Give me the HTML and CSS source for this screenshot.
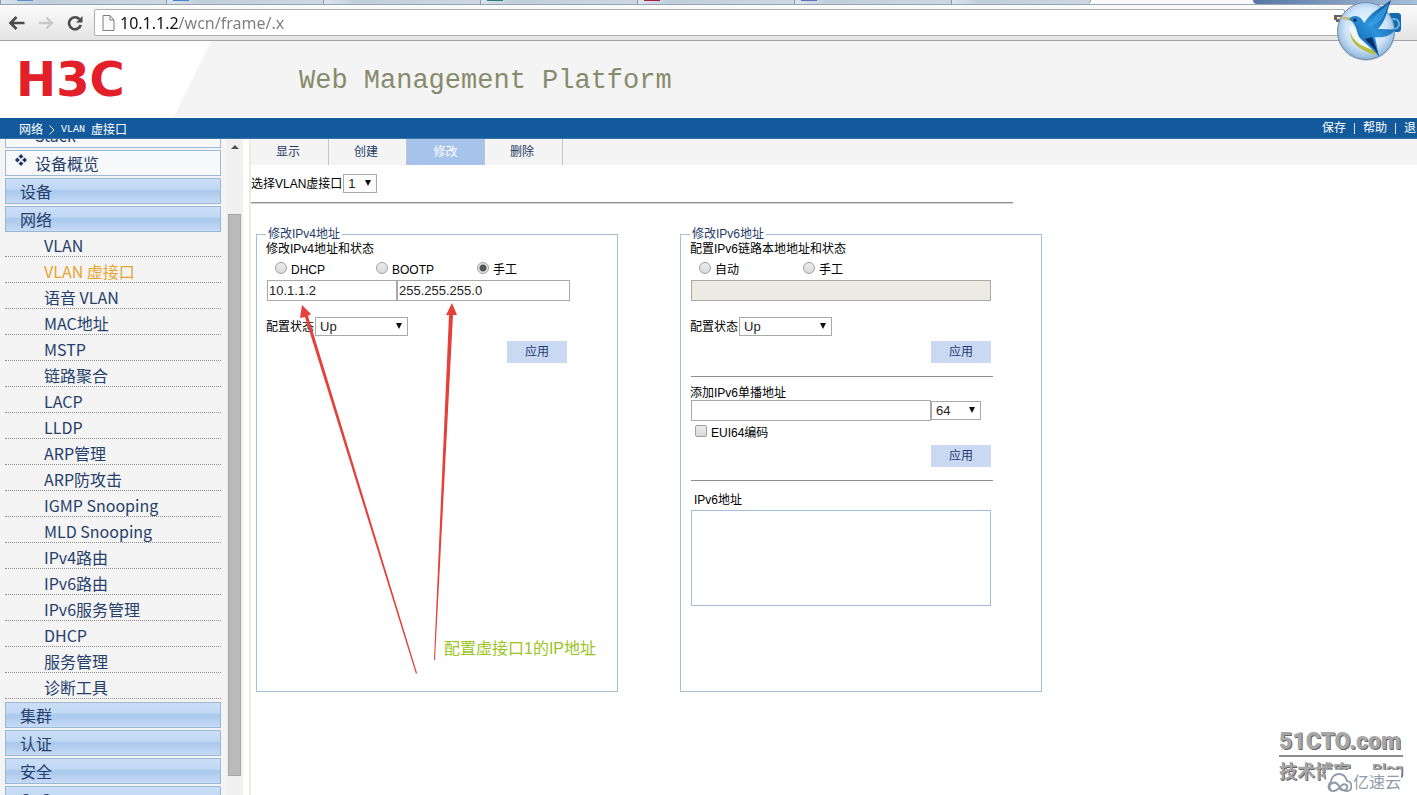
FILE: index.html
```html
<!DOCTYPE html>
<html lang="zh-CN">
<head>
<meta charset="utf-8">
<title>H3C Web Management Platform</title>
<link rel="stylesheet" href="styles.css">
</head>
<body>
<div class="tabstrip">
  <span class="btab btab-first"><i class="fav fav-blue"></i></span>
  <span class="btab"><i class="fav fav-sky"></i></span>
  <span class="btab"></span>
  <span class="btab"><i class="fav fav-teal"></i></span>
  <span class="btab"><i class="fav fav-red"></i></span>
  <span class="btab"><i class="fav fav-indigo"></i></span>
  <span class="btab btab-last"></span>
  <span class="btab-active"></span>
  <span class="caption"></span>
</div>
<div class="toolbar">
  <button class="nav-btn" aria-label="Back"><svg width="18" height="16" viewBox="0 0 18 16"><path d="M8.500 2 2.500 8l6 6M3 8h13.500" fill="none" stroke="#4c4c4c" stroke-width="2.600"/></svg></button>
  <button class="nav-btn" aria-label="Forward"><svg width="18" height="16" viewBox="0 0 18 16"><path d="M9.500 2.500 15 8l-5.500 5.500M15 8H2" fill="none" stroke="#c9c9c9" stroke-width="2.400"/></svg></button>
  <button class="nav-btn" aria-label="Reload"><svg width="18" height="16" viewBox="0 0 18 16"><path d="M13.500 4.200A6 6 0 1 0 14.800 10" fill="none" stroke="#4c4c4c" stroke-width="2.600"/><path d="M16.500 1v6.500H10z" fill="#4c4c4c"/></svg></button>
  <div class="address">
    <svg width="13" height="16" viewBox="0 0 13 16"><path d="M1 .5h7L12 5v10.500H1zM8 .5V5h4" fill="#fafafa" stroke="#7d7d7d"/></svg>
    <input class="url" type="text" value="10.1.1.2/wcn/frame/.x" aria-label="Address">
  </div>
</div>
<svg class="bird" width="80" height="64" viewBox="0 0 80 64">
  <defs>
    <radialGradient id="disc" cx="50%" cy="45%" r="55%"><stop offset="0" stop-color="#f2f9ff"/><stop offset=".65" stop-color="#cfe6fb"/><stop offset="1" stop-color="#8fb4d8"/></radialGradient>
    <linearGradient id="wing" x1="0" y1="1" x2="1" y2="0"><stop offset="0" stop-color="#0b4e9c"/><stop offset=".5" stop-color="#2b93dc"/><stop offset="1" stop-color="#0a4186"/></linearGradient>
  </defs>
  <path d="M4 15h9v7H6v-2H4z" fill="#69645a"/><path d="M7 17h5v2H7z" fill="#e9e6dd"/>
  <rect x="58" y="13" width="13" height="19" rx="3" fill="#1568ad"/><circle cx="64" cy="24" r="5" fill="none" stroke="#61b9ea" stroke-width="2"/>
  <ellipse cx="36" cy="33" rx="29" ry="28" fill="#72869b" opacity=".35"/>
  <circle cx="36" cy="31" r="28.500" fill="url(#disc)" stroke="#6c8fb4"/>
  <path d="M10 17c6 0 10 0 14 2l-1 3C19 20 14 19 10 18z" fill="#c9b56d"/>
  <path d="M20 25c-2 11 3 20 12 23l15 6-9-16z" fill="#f0f6fa"/>
  <path d="M20 31c3 11 12 16 27 20l-2 4C29 50 20 43 20 31z" fill="#b9bf45"/>
  <path d="M19 19c4-5 12-4 15 4 9-13 17-15 27-23-4 12-6 22-13 29 8 0 13 1 18 0-5 7-12 9-21 8l4 20c-5-7-12-12-17-17-7-6-3-14-13-21z" fill="url(#wing)"/>
  <path d="M37 27c8-13 15-17 22-24-4 13-9 22-22 24z" fill="#3aa3e6" opacity=".7"/>
  <path d="M35 39l7-2 7 19c-4-8-9-11-14-17z" fill="#092f68"/>
  <circle cx="25" cy="20" r="1.500" fill="#071c3d"/>
</svg>
<header class="banner">
  <div class="brand"><span class="logo">H3C</span></div>
  <h1 class="product">Web Management Platform</h1>
</header>
<div class="crumbs">
  <div class="trail"><span>网络</span><svg width="6" height="10" viewBox="0 0 6 10"><path d="M.5.5 5 5 .5 9.500" fill="none" stroke="#fff"/></svg><span class="mono">VLAN</span><span>虚接口</span></div>
  <div class="links"><a href="#">保存</a><i></i><a href="#">帮助</a><i></i><a href="#">退出</a></div>
</div>
<div class="workspace">
  <aside class="sidebar">
    <nav class="menu">
      <a class="plain" href="#">Stack</a>
      <a class="plain" href="#"><svg width="12" height="12" viewBox="0 0 12 12"><path d="M6 0l2.400 2.400L6 4.800 3.600 2.400zM6 7.200l2.400 2.400L6 12 3.600 9.600zM2.400 3.600L4.800 6 2.400 8.400 0 6zM9.600 3.600L12 6 9.600 8.400 7.200 6z" fill="#173764"/></svg>设备概览</a>
      <a class="group" href="#">设备</a>
      <a class="group" href="#">网络</a>
      <ul class="sub">
        <li><a href="#">VLAN</a></li>
        <li><a class="current" href="#">VLAN 虚接口</a></li>
        <li><a href="#">语音 VLAN</a></li>
        <li><a href="#">MAC地址</a></li>
        <li><a href="#">MSTP</a></li>
        <li><a href="#">链路聚合</a></li>
        <li><a href="#">LACP</a></li>
        <li><a href="#">LLDP</a></li>
        <li><a href="#">ARP管理</a></li>
        <li><a href="#">ARP防攻击</a></li>
        <li><a href="#">IGMP Snooping</a></li>
        <li><a href="#">MLD Snooping</a></li>
        <li><a href="#">IPv4路由</a></li>
        <li><a href="#">IPv6路由</a></li>
        <li><a href="#">IPv6服务管理</a></li>
        <li><a href="#">DHCP</a></li>
        <li><a href="#">服务管理</a></li>
        <li><a href="#">诊断工具</a></li>
      </ul>
      <a class="group" href="#">集群</a>
      <a class="group" href="#">认证</a>
      <a class="group" href="#">安全</a>
      <a class="group" href="#">QoS</a>
    </nav>
    <div class="scroll"><i class="up"></i><i class="thumb"></i></div>
  </aside>
  <main class="content">
    <div class="tabs">
      <button>显示</button><button>创建</button><button class="active">修改</button><button>删除</button>
    </div>
    <div class="chooser">
      <label for="vif">选择VLAN虚接口</label>
      <span class="pick pick-xs"><select id="vif"><option>1</option></select></span>
    </div>
    <hr class="rule">
    <div class="panels">
      <fieldset class="panel">
        <legend>修改IPv4地址</legend>
        <div class="line">修改IPv4地址和状态</div>
        <div class="radios">
          <label><input type="radio" name="v4">DHCP</label>
          <label><input type="radio" name="v4">BOOTP</label>
          <label><input type="radio" name="v4" checked>手工</label>
        </div>
        <div class="fields">
          <input class="box ip" type="text" value="10.1.1.2" aria-label="IP">
          <input class="box mask" type="text" value="255.255.255.0" aria-label="Mask">
        </div>
        <div class="state"><label for="s4">配置状态</label><span class="pick pick-md"><select id="s4"><option>Up</option></select></span></div>
        <div class="actions"><button class="apply">应用</button></div>
      </fieldset>
      <fieldset class="panel">
        <legend>修改IPv6地址</legend>
        <div class="line">配置IPv6链路本地地址和状态</div>
        <div class="radios radios-wide">
          <label><input type="radio" name="v6">自动</label>
          <label><input type="radio" name="v6">手工</label>
        </div>
        <div class="fields"><input class="box full" type="text" disabled aria-label="Link-local"></div>
        <div class="state"><label for="s6">配置状态</label><span class="pick pick-md"><select id="s6"><option>Up</option></select></span></div>
        <div class="actions"><button class="apply">应用</button></div>
        <hr class="split">
        <label class="line" for="uni">添加IPv6单播地址</label>
        <div class="fields"><input class="box uni" id="uni" type="text"><span class="pick pick-sm"><select aria-label="Prefix"><option>64</option></select></span></div>
        <div class="check"><label><input type="checkbox">EUI64编码</label></div>
        <div class="actions actions-tight"><button class="apply">应用</button></div>
        <hr class="split">
        <label class="line list-title" for="list">IPv6地址</label>
        <textarea class="list" id="list"></textarea>
      </fieldset>
    </div>
    <svg class="arrows" width="206" height="372" viewBox="0 0 206 372" fill="#e5403a">
      <path d="M51 2l9 9-3 2 109 357-1 1L54 14l-5 1z"/>
      <path d="M201 0l5 12h-4l-18 345h-1l15-345h-3z"/>
    </svg>
    <div class="note">配置虚接口1的IP地址</div>
  </main>
</div>
<div class="stamp">
  <div class="stamp-name">51CTO.com</div>
  <div class="stamp-sub"><span>技术博客</span><span class="blog">Blog</span></div>
</div>
<div class="cloud">
  <svg width="26" height="20" viewBox="0 0 26 20" fill="none" stroke="#919baa" stroke-width="2"><path d="M6 18a5 5 0 0 1-1-9C5 4 9 1 13 1s7 3 8 7a5 5 0 0 1-1 10c-3 0-5-2-7-5s-4-4-6-3a4 4 0 0 0 1 8c4 0 5-4 8-6s6 0 5 3-5 3-8 0"/></svg>
  <span>亿速云</span>
</div>
</body>
</html>
```
FILE: styles.css
```css
* { box-sizing: border-box; }
body {
  margin: 0;
  height: 100vh;
  overflow: hidden;
  display: flex;
  flex-direction: column;
  position: relative;
  background: #fff;
  font: 12px/14px "Liberation Sans", "Noto Sans CJK SC", sans-serif;
  color: #000;
}
button, input, select, textarea { font: inherit; margin: 0; }
a { color: inherit; text-decoration: none; }

.tabstrip { display: flex; height: 5px; flex: none; background: #f9f9f9; border-bottom: 1px solid #97a3b0; overflow: hidden; }
.btab { width: 157px; padding-left: 6px; background: linear-gradient(90deg, #dbe4ec, #c2cfdc 20%, #cbd7e2); border-left: 1px solid #8c99a8; }
.btab-first { width: 166px; padding-left: 16px; }
.btab-last { width: 140px; border-radius: 0 0 4px 0; border-right: 1px solid #8c99a8; }
.btab-active { width: 162px; background: #f9f9f9; }
.caption { flex: 1; background: linear-gradient(90deg, #5577a5, #a8bfda); border-radius: 0 0 0 4px; }
.fav { display: block; width: 16px; height: 1px; }
.fav-blue { background: #5c8fc9; }
.fav-sky { background: #3b83d0; }
.fav-teal { background: #2c7d7d; }
.fav-red { background: #a8203f; }
.fav-indigo { background: #5f6fc4; }

.toolbar { display: flex; align-items: center; flex: none; height: 36px; padding: 0 72px 0 8px; background: linear-gradient(#fbfbfb, #e4e4e4); border-bottom: 1px solid #a3a3a3; }
.nav-btn { width: 29px; height: 26px; padding: 0; border: 0; background: none; text-align: left; }
.nav-btn svg { display: block; }
.address { flex: 1; display: flex; align-items: center; gap: 5px; height: 27px; margin-left: -1px; padding-left: 7px; background: #fff; border: 1px solid #adadad; border-radius: 2px; }
.url { flex: 1; border: 0; padding: 0; height: 22px; font: 16px/22px "Noto Sans", sans-serif; color: transparent; background: linear-gradient(90deg, #111 59px, #7d7d7d 59px); background-clip: text; -webkit-background-clip: text; }
.bird { position: absolute; top: 0; right: 7px; }

.banner { display: flex; align-items: center; flex: none; height: 77px; background: #f4f4f4; border-bottom: 1px solid #fff; }
.brand { width: 211px; height: 76px; padding: 0 16px; display: flex; align-items: center; background: #fff; clip-path: polygon(0 0, 100% 0, 174px 100%, 0 100%); }
.logo { font: bold 48px/48px "DejaVu Sans", sans-serif; color: #e3202a; }
.product { margin: 0 0 0 88px; padding-top: 4px; font: 27px/36px "Liberation Mono", monospace; color: #878b6c; }

.crumbs { display: flex; justify-content: space-between; align-items: center; flex: none; height: 21px; padding-left: 19px; background: #125a9b; border-bottom: 1px solid #3c76a8; color: #fff; overflow: hidden; white-space: nowrap; }
.trail { display: flex; align-items: center; gap: 6px; padding-top: 3px; }
.mono { font: 10px/14px "Liberation Mono", monospace; }
.links { display: flex; align-items: center; width: 95px; flex: none; }
.links a { flex: none; }
.links i { flex: none; width: 1px; height: 11px; margin: 0 8px; background: #d5e2ee; }

.workspace { display: flex; flex: 1; min-height: 0; }
.sidebar { display: flex; flex: none; width: 251px; overflow: hidden; background: linear-gradient(90deg, #f4f4f4 243px, #fff 243px); border-right: 2px solid #ecebe4; }
.menu { width: 216px; flex: none; margin: -17px 5px 0; font: 16px/24px "Noto Sans CJK SC", sans-serif; color: #26406b; }
.plain, .group { display: flex; align-items: center; height: 26px; margin-bottom: 2px; border: 1px solid #9bb8d6; }
.plain { padding-left: 29px; background: #f7f8fa; }
.plain svg { flex: none; margin: 0 8px 6px -20px; }
.group { padding-left: 14px; background: linear-gradient(#cbdff7 0, #c1d8f4 40%, #a9c8ec 50%, #c6dbf5); }
.sub { margin: -3px 0 3px; padding: 0; list-style: none; }
.sub li { height: 26px; padding: 2px 0 0 39px; border-bottom: 1px dotted #8f8f8f; }
.sub .current { color: #e8a42d; }
.scroll { width: 17px; padding: 6px 2px 0; display: flex; flex-direction: column; align-items: center; background: #f0f0f0; }
.up { border: 4px solid transparent; border-top: 0; border-bottom-color: #505050; }
.thumb { width: 13px; height: 562px; margin-top: 65px; background: #bababa; border: 1px solid #a6a6a6; }

.content { position: relative; flex: 1; min-width: 0; }
.tabs { display: flex; height: 26px; background: #f4f4f4; }
.tabs button { width: 78px; padding: 0 3px 0 0; border: 0; border-right: 1px solid #c2c6cb; background: none; color: #1f3a66; }
.tabs .active { background: #a5c3eb; color: #fff; padding: 0; }
.chooser { display: flex; align-items: center; gap: 1px; height: 37px; }
.rule { height: 2px; max-width: 762px; margin: 0; border: 0; border-top: 1px solid #8d8d8d; border-bottom: 1px solid #d5d5d5; }
.panels { display: flex; gap: 62px; padding: 22px 5px 0; }
.panel { width: 362px; min-height: 466px; margin: 0; padding: 0 9px; border: 1px solid #a4bfda; }
.panel legend { height: 16px; padding: 0 2px; line-height: 16px; color: #1f3a66; }
.line { display: block; height: 14px; }
.radios { display: flex; align-items: center; height: 24px; padding-left: 9px; }
.radios label { display: flex; align-items: center; gap: 4px; width: 101px; padding-top: 4px; }
.radios-wide label { width: 104px; }
input[type="radio"], input[type="checkbox"] { appearance: none; width: 12px; height: 12px; margin-bottom: 4px; border: 1px solid #a0a0a0; background: linear-gradient(#ececec, #d9d9d9); }
input[type="radio"] { border-radius: 50%; }
input[type="radio"]:checked { background: radial-gradient(circle, #555 3px, #e3e3e3 4px); }
input[type="checkbox"] { border-radius: 2px; }
.fields { display: flex; align-items: center; height: 21px; padding-left: 1px; }
.box { height: 21px; padding: 0 1px; border: 1px solid #a9a9a9; background: #fff; font-size: 13px; color: #222; }
.box:disabled { background: #ebebe4; }
.ip { width: 130px; }
.mask { width: 173px; }
.full { width: 300px; }
.uni { width: 240px; }
.state { display: flex; align-items: center; height: 19px; margin-top: 16px; }
.state label { margin-right: 1px; }
.pick { position: relative; display: block; height: 19px; }
.pick::after { content: ""; position: absolute; right: 6px; top: 6px; border: 3px solid transparent; border-top: 6px solid #111; border-bottom: 0; pointer-events: none; }
.pick select { display: block; appearance: none; width: 100%; height: 19px; padding: 0 4px; border: 1px solid #a9a9a9; border-radius: 0; background: #fff; font-size: 13px; color: #222; }
.pick-xs { width: 34px; }
.pick-sm { width: 50px; }
.pick-md { width: 93px; }
.actions { display: flex; justify-content: flex-end; margin-top: 5px; padding-right: 41px; }
.actions-tight { margin-top: 2px; }
.apply { width: 60px; height: 22px; padding: 0; border: 0; background: #c9d9f2; color: #1f3a76; }
.split { width: 302px; height: 1px; margin: 13px 0 9px 1px; border: 0; background: #8d8d8d; }
.check { display: flex; align-items: center; height: 22px; padding-left: 5px; }
.check label { display: flex; align-items: center; gap: 4px; padding-top: 2px; }
.list-title { margin: 12px 0 3px; padding-left: 4px; }
.list { display: block; width: 300px; height: 96px; margin-left: 1px; border: 1px solid #a4bfda; resize: none; }
.arrows { position: absolute; left: 0; top: 164px; pointer-events: none; }
.note { position: absolute; left: 193px; top: 498px; font-size: 16px; line-height: 24px; color: #9bc41e; }

.stamp { position: absolute; right: 14px; bottom: 12px; width: 124px; color: #a6a6a6; text-shadow: 1px 1px 0 #666; }
.stamp-name { font: 900 23px/26px Roboto, sans-serif; border-bottom: 2px solid #8d8d8d; }
.stamp-sub { display: flex; justify-content: space-between; padding-top: 4px; font-size: 18px; line-height: 22px; font-weight: bold; }
.stamp-sub .blog { font-size: 14px; line-height: 16px; }
.cloud { position: absolute; right: 16px; bottom: 0; display: flex; align-items: center; gap: 1px; height: 25px; background: #fff; color: #919baa; font-size: 16px; line-height: 24px; }
```
